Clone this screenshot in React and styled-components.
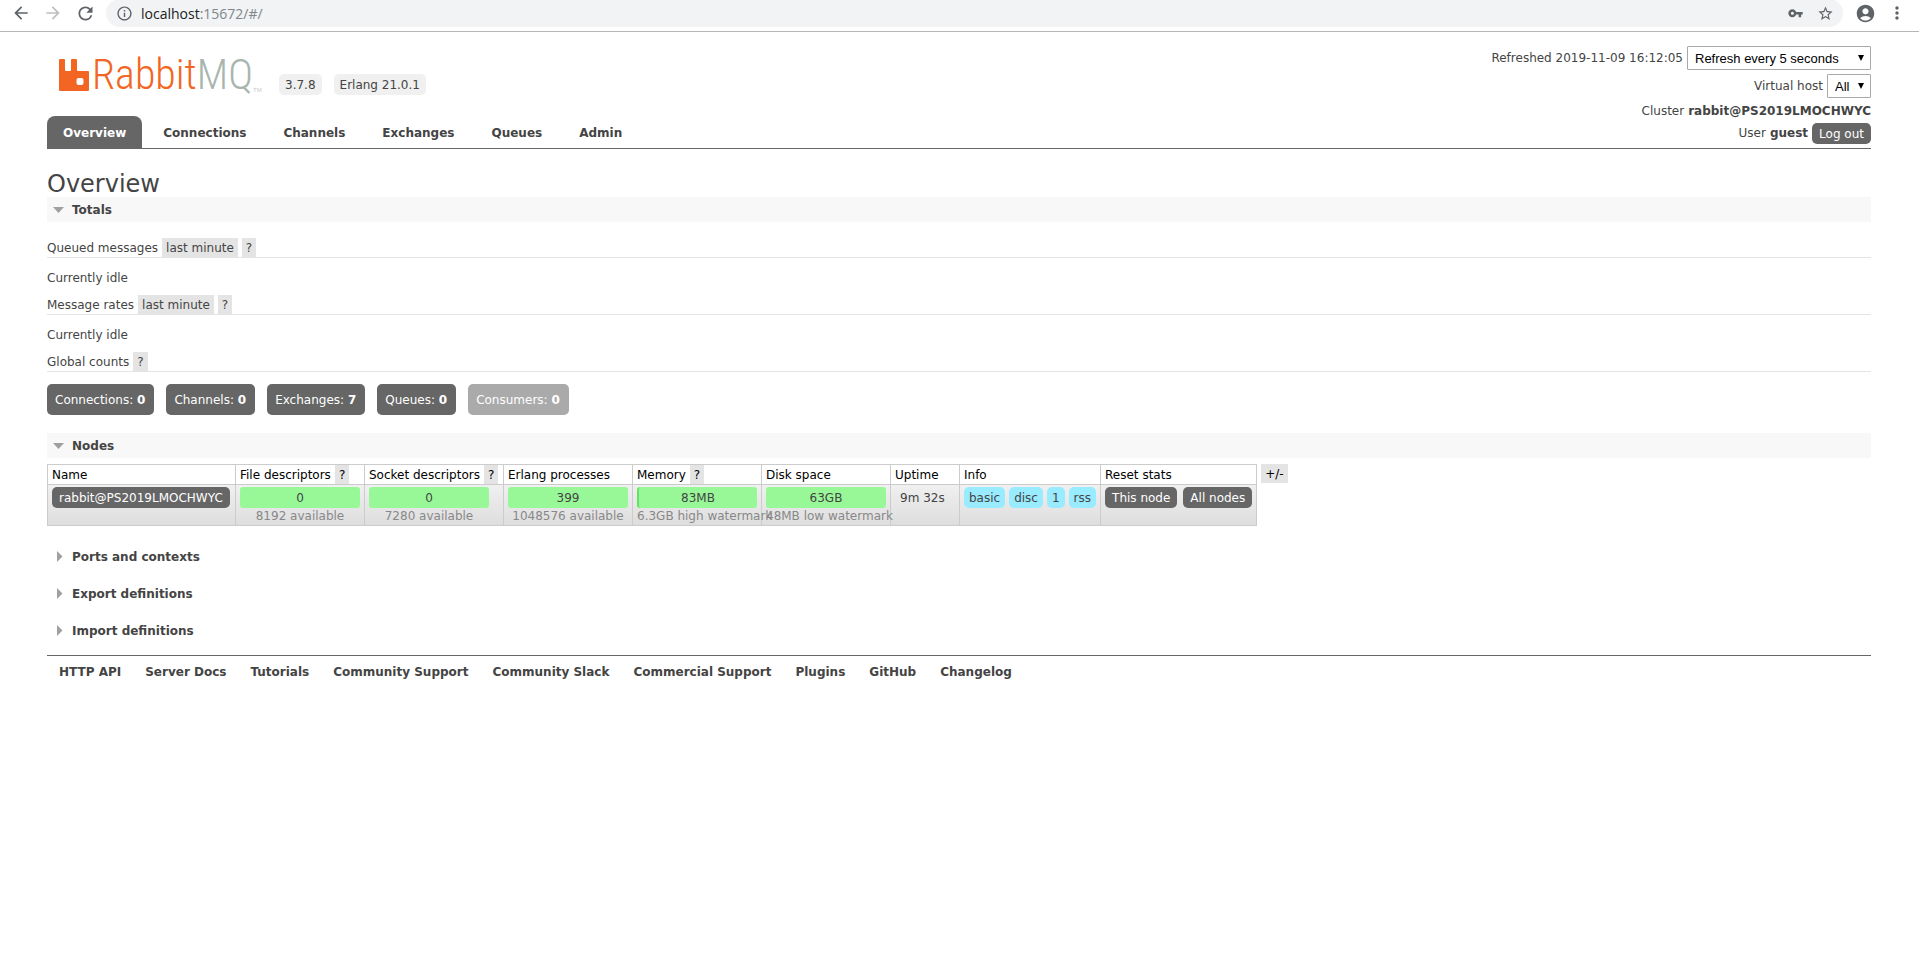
import React from 'react';
import styled, { createGlobalStyle } from 'styled-components';
import {
  MdArrowBack,
  MdArrowForward,
  MdRefresh,
  MdInfoOutline,
  MdStarBorder,
  MdAccountCircle,
  MdMoreVert,
} from 'react-icons/md';

const GlobalStyle = createGlobalStyle`
  * {
    box-sizing: border-box;
  }

  body {
    margin: 0;
    background: #fff;
    color: #444;
    font-family: Verdana, 'DejaVu Sans', sans-serif;
    font-size: 12px;
    line-height: 15px;
  }

  button {
    font-family: inherit;
    font-size: inherit;
    line-height: inherit;
    cursor: pointer;
  }
`;

const BrowserBar = styled.div`
  display: flex;
  align-items: center;
  gap: 10px;
  height: 32px;
  padding: 0 11px 5px 10px;
  border-bottom: 1px solid #b6b6b6;
`;

const BarButton = styled.button`
  display: flex;
  align-items: center;
  justify-content: center;
  width: 22px;
  height: 26px;
  padding: 0;
  border: 0;
  background: none;
  color: ${props => (props.$faded ? '#bcbec1' : '#5f6368')};
`;

const AddressBox = styled.div`
  display: flex;
  align-items: center;
  flex-grow: 1;
  gap: 8px;
  height: 28px;
  margin-right: 1px;
  padding: 0 7px 0 10px;
  border-radius: 14px;
  background: #f1f3f4;
  color: #5f6368;
`;

const Url = styled.span`
  flex-grow: 1;
  font-family: 'Segoe UI', 'Open Sans', sans-serif;
  font-size: 14px;
  color: #80868b;
`;

const Host = styled.span`
  color: #202124;
`;

const Page = styled.div`
  padding: 0 48px 0 47px;
`;

const Header = styled.header`
  display: flex;
  justify-content: space-between;
  height: 117px;
  border-bottom: 1px solid #666;
`;

const Brand = styled.div`
  display: flex;
  flex-direction: column;
  justify-content: space-between;
`;

const LogoRow = styled.div`
  display: flex;
  align-items: flex-end;
  height: 63px;
  padding-left: 12px;
`;

const Logo = styled.a`
  display: flex;
  flex-shrink: 0;
  align-items: flex-start;
  width: 208px;
  height: 38px;
  text-decoration: none;
`;

const LogoMark = styled.svg`
  flex-shrink: 0;
`;

const LogoText = styled.span`
  margin-left: 3px;
  color: #f26522;
  font-family: 'Roboto Condensed', Lato, sans-serif;
  font-weight: 300;
  font-size: 42px;
  line-height: 36px;
`;

const LogoSuffix = styled.span`
  color: #a8b5ae;
`;

const Trademark = styled.span`
  align-self: flex-end;
  color: #c4ccc8;
  font-family: 'Liberation Sans', sans-serif;
  font-size: 6px;
  line-height: 10px;
`;

const Version = styled.abbr`
  margin-left: 12px;
  padding: 4px 6px 2px;
  border-radius: 5px;
  background: #f0f0f0;
`;

const Tabs = styled.nav`
  display: flex;
  gap: 5px;
`;

const Tab = styled.a`
  padding: 10px 16px 7px;
  border-radius: 8px 8px 0 0;
  background: ${props => (props.$active ? '#666' : 'transparent')};
  color: ${props => (props.$active ? '#fff' : '#444')};
  font-weight: bold;
  text-decoration: none;
`;

const LoginInfo = styled.div`
  display: flex;
  flex-direction: column;
  align-items: flex-end;
  padding-top: 14px;
`;

const InfoRow = styled.div`
  display: flex;
  align-items: center;
  gap: 4px;
  height: ${props => props.$height}px;
`;

const SelectWrap = styled.span`
  position: relative;
  display: flex;
`;

const Select = styled.select`
  appearance: none;
  min-width: ${props => props.$minWidth || 44}px;
  height: 24px;
  padding: 0 19px 0 7px;
  border: 1px solid #a9a9a9;
  border-radius: 1px;
  background: #fff;
  color: #000;
  font-family: 'Liberation Sans', Arial, sans-serif;
  font-size: 13px;
`;

const SelectArrow = styled.svg`
  position: absolute;
  top: 9px;
  right: 7px;
  pointer-events: none;
`;

const DarkButton = styled.button`
  padding: 4px 7px 2px;
  border: 0;
  border-radius: 5px;
  background: #666;
  color: #fff;
`;

const Title = styled.h1`
  margin: 22px 0 0;
  font-size: 24px;
  font-weight: normal;
  line-height: 26px;
`;

const SectionTitle = styled.h2`
  display: flex;
  align-items: center;
  gap: 7px;
  height: 25px;
  margin: ${props => (props.$open ? '0' : '0 0 12px')};
  padding: 1px 0 0 6px;
  background: ${props => (props.$open ? '#f8f8f8' : 'transparent')};
  font-size: 12px;
`;

const Totals = styled.div`
  padding: 16px 0 18px;
`;

const Subheading = styled.h3`
  display: flex;
  gap: 4px;
  height: 20px;
  margin: 0;
  border-bottom: 1px solid #e4e4e4;
  font-size: 12px;
  font-weight: normal;
  line-height: 21px;
`;

const Chip = styled.button`
  height: 19px;
  padding: 2px 4px 0;
  border: 0;
  background: #e4e4e4;
  color: ${props => (props.$dark ? '#000' : '#444')};
  line-height: 15px;
`;

const Idle = styled.p`
  margin: 13px 0 9px;
`;

const Counts = styled.div`
  display: flex;
  gap: 12px;
  margin-top: 12px;
`;

const Count = styled.a`
  padding: 9px 9px 7px 8px;
  border-radius: 5px;
  background: ${props => (props.$disabled ? '#aaa' : '#666')};
  color: #fff;
  text-decoration: none;
`;

const NodesRow = styled.div`
  display: flex;
  align-items: flex-start;
  gap: 4px;
  margin: 6px 0 18px;
`;

const NodeTable = styled.table`
  border-collapse: collapse;
`;

const HeadCell = styled.th`
  height: 20px;
  padding: 0 4px;
  border: 1px solid #ccc;
  color: #000;
  font-weight: normal;
  text-align: left;
  white-space: nowrap;
`;

const HeadContent = styled.div`
  display: flex;
  gap: 4px;
  height: 19px;
  line-height: 21px;
`;

const Row = styled.tr`
  background: linear-gradient(#f0f0f0, #ddd);
`;

const Cell = styled.td`
  height: 41px;
  padding: ${props => (props.$text ? '2px 9px 1px' : '2px 4px 1px')};
  border: 1px solid #ccc;
  line-height: 23px;
  vertical-align: top;
  white-space: nowrap;
`;

const CellItems = styled.div`
  display: flex;
  gap: ${props => props.$gap}px;
  line-height: 15px;
`;

const Usage = styled.div`
  width: 120px;
  text-align: center;
  line-height: 15px;
`;

const UsageBar = styled.div`
  padding: 4px 0 2px;
  border-left: ${props => (props.$used ? '2px solid #66e066' : '0')};
  border-radius: 3px;
  background: #98f898;
`;

const UsageNote = styled.div`
  padding-top: 1px;
  color: #888;
`;

const Tag = styled.abbr`
  padding: 4px 5px 2px;
  border-radius: 5px;
  background: #99ebff;
`;

const Footer = styled.footer`
  display: flex;
  gap: 24px;
  margin-top: 12px;
  padding: 9px 12px;
  border-top: 1px solid #666;
`;

const FooterLink = styled.a`
  color: #444;
  font-weight: bold;
  text-decoration: none;
`;

const tabs = ['Overview', 'Connections', 'Channels', 'Exchanges', 'Queues', 'Admin'];

const counts = [
  { name: 'Connections', value: 0 },
  { name: 'Channels', value: 0 },
  { name: 'Exchanges', value: 7 },
  { name: 'Queues', value: 0 },
  { name: 'Consumers', value: 0, disabled: true },
];

const columns = [
  { name: 'Name', width: 188 },
  { name: 'File descriptors', width: 129, help: true },
  { name: 'Socket descriptors', width: 139, help: true },
  { name: 'Erlang processes', width: 129 },
  { name: 'Memory', width: 129, help: true },
  { name: 'Disk space', width: 129 },
  { name: 'Uptime', width: 69 },
  { name: 'Info', width: 141 },
  { name: 'Reset stats', width: 156 },
];

const usages = [
  { value: '0', note: '8192 available' },
  { value: '0', note: '7280 available' },
  { value: '399', note: '1048576 available' },
  { value: '83MB', note: '6.3GB high watermark', used: true },
  { value: '63GB', note: '48MB low watermark' },
];

const footerLinks = [
  'HTTP API',
  'Server Docs',
  'Tutorials',
  'Community Support',
  'Community Slack',
  'Commercial Support',
  'Plugins',
  'GitHub',
  'Changelog',
];

const RabbitIcon = () => (
  <LogoMark width="30" height="34" viewBox="0 0 30 34" aria-hidden="true">
    <path
      fill="#f26522"
      fillRule="evenodd"
      d="M1 2h4q1 0 1 1v10q0 1 1 1h4q1 0 1-1V3q0-1 1-1h4q1 0 1 1v10q0 1 1 1h10q1 0 1 1v18q0 1-1 1H1q-1 0-1-1V3q0-1 1-1zM19.500 21q-2 0-2 2v3q0 2 2 2h3q2 0 2-2v-3q0-2-2-2z"
    />
  </LogoMark>
);

const KeyIcon = () => (
  <svg width="15" height="15" viewBox="0 0 24 24" fill="currentColor" aria-hidden="true">
    <path d="M13 9.500C12.200 7 9.800 5 7 5c-3.600 0-6.500 3-6.500 6.500S3.400 18 7 18c2.800 0 5.200-2 6-4.500h4V18h4v-4.500h2.500v-4zM7 14a2.500 2.500 0 1 1 0-5 2.500 2.500 0 0 1 0 5z" />
  </svg>
);

const Triangle = ({ open }) => (
  <svg width="12" height="12" viewBox="0 0 12 12" aria-hidden="true">
    <path d={open ? 'M0 3h11L5.500 9z' : 'M4 0v11l5.500-5.500z'} fill="#a0a0a0" />
  </svg>
);

const Dropdown = ({ id, minWidth, children }) => (
  <SelectWrap>
    <Select id={id} $minWidth={minWidth}>{children}</Select>
    <SelectArrow width="6" height="6" viewBox="0 0 6 6" aria-hidden="true">
      <path d="M0 0h6L3 6z" fill="#000" />
    </SelectArrow>
  </SelectWrap>
);

const Section = ({ title, open }) => (
  <SectionTitle $open={open}>
    <Triangle open={open} />
    {title}
  </SectionTitle>
);

const App = () => {
  return (
    <>
      <GlobalStyle />
      <BrowserBar>
        <BarButton aria-label="Back"><MdArrowBack size={20} /></BarButton>
        <BarButton aria-label="Forward" $faded><MdArrowForward size={20} /></BarButton>
        <BarButton aria-label="Reload"><MdRefresh size={21} /></BarButton>
        <AddressBox>
          <MdInfoOutline size={17} />
          <Url><Host>localhost</Host>:15672/#/</Url>
          <BarButton aria-label="Passwords"><KeyIcon /></BarButton>
          <BarButton aria-label="Bookmark"><MdStarBorder size={17} /></BarButton>
        </AddressBox>
        <BarButton aria-label="Profile"><MdAccountCircle size={21} /></BarButton>
        <BarButton aria-label="Menu"><MdMoreVert size={20} /></BarButton>
      </BrowserBar>

      <Page>
        <Header>
          <Brand>
            <LogoRow>
              <Logo href="#/">
                <RabbitIcon />
                <LogoText>Rabbit<LogoSuffix>MQ</LogoSuffix></LogoText>
                <Trademark>TM</Trademark>
              </Logo>
              <Version>3.7.8</Version>
              <Version>Erlang 21.0.1</Version>
            </LogoRow>
            <Tabs>
              {tabs.map((tab, index) => (
                <Tab key={tab} href="#/" $active={index === 0}>{tab}</Tab>
              ))}
            </Tabs>
          </Brand>
          <LoginInfo>
            <InfoRow $height={24}>
              <label htmlFor="refresh">Refreshed 2019-11-09 16:12:05</label>
              <Dropdown id="refresh" minWidth={184}><option>Refresh every 5 seconds</option></Dropdown>
            </InfoRow>
            <InfoRow $height={32}>
              <label htmlFor="vhost">Virtual host</label>
              <Dropdown id="vhost"><option>All</option></Dropdown>
            </InfoRow>
            <InfoRow $height={18}>Cluster <b>rabbit@PS2019LMOCHWYC</b></InfoRow>
            <InfoRow $height={26}>User <b>guest</b> <DarkButton>Log out</DarkButton></InfoRow>
          </LoginInfo>
        </Header>

        <Title>Overview</Title>
        <Section title="Totals" open />
        <Totals>
          <Subheading>Queued messages <Chip>last minute</Chip><Chip>?</Chip></Subheading>
          <Idle>Currently idle</Idle>
          <Subheading>Message rates <Chip>last minute</Chip><Chip>?</Chip></Subheading>
          <Idle>Currently idle</Idle>
          <Subheading>Global counts <Chip>?</Chip></Subheading>
          <Counts>
            {counts.map(count => (
              <Count key={count.name} href="#/" $disabled={count.disabled}>
                {count.name}: <b>{count.value}</b>
              </Count>
            ))}
          </Counts>
        </Totals>

        <Section title="Nodes" open />
        <NodesRow>
          <NodeTable>
            <thead>
              <tr>
                {columns.map(column => (
                  <HeadCell key={column.name} style={{ width: column.width }}>
                    <HeadContent>
                      {column.name} {column.help && <Chip $dark>?</Chip>}
                    </HeadContent>
                  </HeadCell>
                ))}
              </tr>
            </thead>
            <tbody>
              <Row>
                <Cell>
                  <CellItems $gap={4}><DarkButton>rabbit@PS2019LMOCHWYC</DarkButton></CellItems>
                </Cell>
                {usages.map(usage => (
                  <Cell key={usage.note}>
                    <Usage>
                      <UsageBar $used={usage.used}>{usage.value}</UsageBar>
                      <UsageNote>{usage.note}</UsageNote>
                    </Usage>
                  </Cell>
                ))}
                <Cell $text>9m 32s</Cell>
                <Cell>
                  <CellItems $gap={4}>
                    <Tag>basic</Tag>
                    <Tag>disc</Tag>
                    <Tag>1</Tag>
                    <Tag>rss</Tag>
                  </CellItems>
                </Cell>
                <Cell>
                  <CellItems $gap={6}>
                    <DarkButton>This node</DarkButton>
                    <DarkButton>All nodes</DarkButton>
                  </CellItems>
                </Cell>
              </Row>
            </tbody>
          </NodeTable>
          <Chip $dark>+/-</Chip>
        </NodesRow>

        <Section title="Ports and contexts" />
        <Section title="Export definitions" />
        <Section title="Import definitions" />

        <Footer>
          {footerLinks.map(link => (
            <FooterLink key={link} href="#/">{link}</FooterLink>
          ))}
        </Footer>
      </Page>
    </>
  );
};

export default App;
